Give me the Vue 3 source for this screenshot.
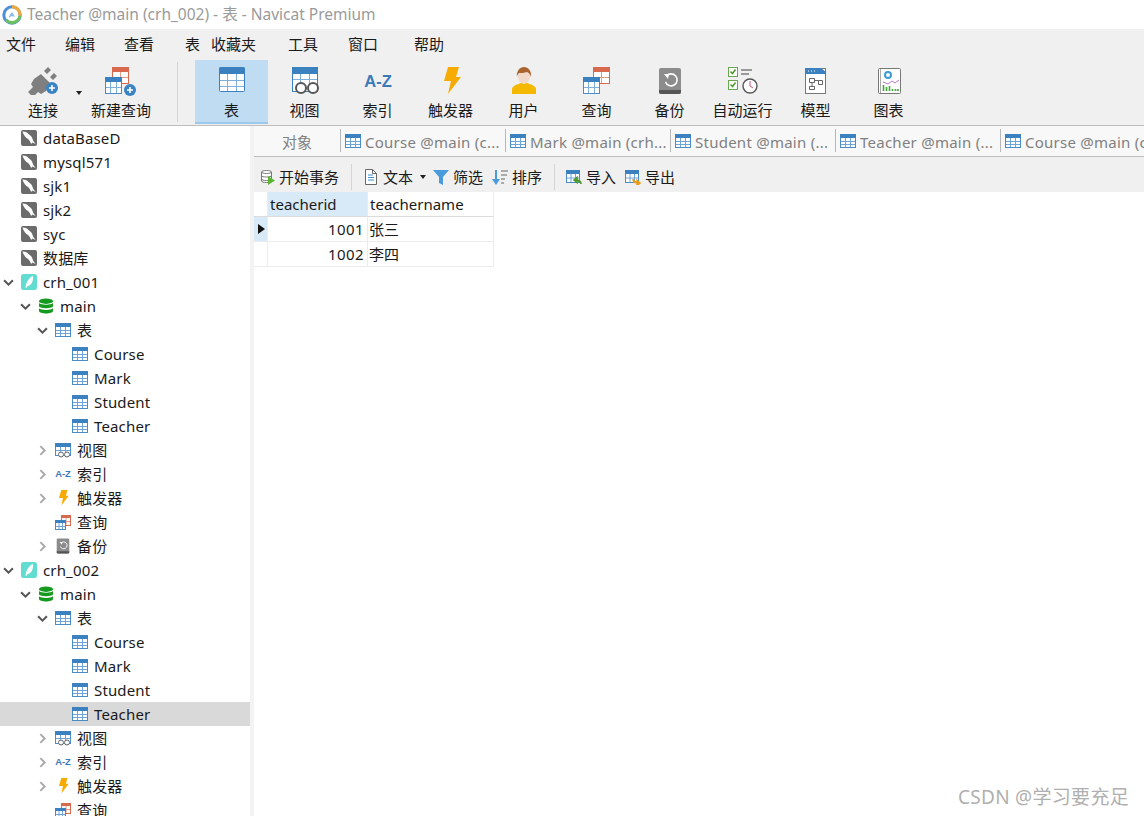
<script setup>
const menus = [
  { t: '文件', w: 59 }, { t: '编辑', w: 59 }, { t: '查看', w: 61 }, { t: '表', w: 26 },
  { t: '收藏夹', w: 77 }, { t: '工具', w: 60 }, { t: '窗口', w: 66 }, { t: '帮助', w: 40 },
]
const tools = [
  { t: '表', i: 'tb-table', w: 26, on: true },
  { t: '视图', i: 'tb-view', w: 30 },
  { t: '索引', i: 'i-az', w: 28 },
  { t: '触发器', i: 'i-bolt', w: 28 },
  { t: '用户', i: 'i-user', w: 28 },
  { t: '查询', i: 'tb-query', w: 28 },
  { t: '备份', i: 'i-backup', w: 28 },
  { t: '自动运行', i: 'i-auto', w: 30 },
  { t: '模型', i: 'i-model', w: 28 },
  { t: '图表', i: 'i-chart', w: 28 },
]
const tabs = ['Course @main (c...', 'Mark @main (crh...', 'Student @main (...', 'Teacher @main (...', 'Course @main (c']

const group = (name, sel) => [
  { t: name, i: 'i-sqlite', l: 0, a: 'down' },
  { t: 'main', i: 'i-db', l: 1, a: 'down' },
  { t: '表', i: 'i-table', l: 2, a: 'down' },
  { t: 'Course', i: 'i-table', l: 3 },
  { t: 'Mark', i: 'i-table', l: 3 },
  { t: 'Student', i: 'i-table', l: 3 },
  { t: 'Teacher', i: 'i-table', l: 3, sel },
  { t: '视图', i: 'i-view', l: 2, a: 'right' },
  { t: '索引', i: 'i-az', l: 2, a: 'right' },
  { t: '触发器', i: 'i-bolt', l: 2, a: 'right' },
  { t: '查询', i: 'i-query', l: 2 },
  { t: '备份', i: 'i-backup', l: 2, a: 'right' },
]
const tree = [
  ...['dataBaseD', 'mysql571', 'sjk1', 'sjk2', 'syc', '数据库'].map(t => ({ t, i: 'i-mysql', l: 0 })),
  ...group('crh_001', false),
  ...group('crh_002', true),
]
const rows = [
  { id: 1001, name: '张三', cur: true },
  { id: 1002, name: '李四', cur: false },
]
</script>

<template>
  <div class="app">
    <svg class="defs" aria-hidden="true">
      <symbol id="i-table" viewBox="0 0 16 16">
        <rect x=".5" y="1.5" width="15" height="13" fill="#fff" stroke="#4a8cc8"/>
        <rect x="0" y="1" width="16" height="4" rx="1" fill="#3b80bf"/>
        <path d="M5.5 5v9M10.5 5v9M1 8.5h14M1 11.5h14" stroke="#6ea5d8" fill="none"/>
      </symbol>
      <symbol id="i-view" viewBox="0 0 16 16">
        <rect x=".5" y="1.5" width="15" height="12" fill="#fff" stroke="#4a8cc8"/>
        <rect x="0" y="1" width="16" height="4" rx="1" fill="#3b80bf"/>
        <path d="M5.5 5v8M10.5 5v8M1 8.5h14" stroke="#6ea5d8" fill="none"/>
        <circle cx="6" cy="12.5" r="2.5" fill="#fff" stroke="#666"/>
        <circle cx="12" cy="12.5" r="2.5" fill="#fff" stroke="#666"/>
      </symbol>
      <symbol id="i-query" viewBox="0 0 16 16">
        <rect x="6.5" y="1.5" width="9" height="10" fill="#fff" stroke="#d9694c"/>
        <rect x="6" y="1" width="10" height="3" fill="#d9694c"/>
        <path d="M11 4v7M7 7.5h8" stroke="#e59a86"/>
        <rect x=".5" y="6.5" width="10" height="9" fill="#fff" stroke="#4a8cc8"/>
        <rect x="0" y="6" width="11" height="3" fill="#3b80bf"/>
        <path d="M4 9v6M7.5 9v6M1 12.5h9" stroke="#6ea5d8"/>
      </symbol>
      <symbol id="tb-table" viewBox="0 0 26 28">
        <rect x=".5" y=".5" width="25" height="24" rx="1" fill="#fff" stroke="#3b80bf"/>
        <path d="M0 2a2 2 0 0 1 2-2h22a2 2 0 0 1 2 2v5H0z" fill="#3b80bf"/>
        <path d="M8.5 7v17M17.5 7v17M1 13.5h24M1 19.5h24" stroke="#7fb0dc" fill="none"/>
      </symbol>
      <symbol id="tb-view" viewBox="0 0 30 28">
        <rect x="2.5" y=".5" width="25" height="24" fill="#fff" stroke="#3b80bf"/>
        <path d="M2 2a2 2 0 0 1 2-2h22a2 2 0 0 1 2 2v5H2z" fill="#3b80bf"/>
        <path d="M10.5 7v10M19.5 7v10M3 12.5h24" stroke="#7fb0dc" fill="none"/>
        <circle cx="11" cy="21" r="5" fill="#fff" stroke="#555" stroke-width="2"/>
        <circle cx="23" cy="21" r="5" fill="#fff" stroke="#555" stroke-width="2"/>
      </symbol>
      <symbol id="tb-query" viewBox="0 0 28 28">
        <rect x="10.5" y=".5" width="16" height="16" fill="#fff" stroke="#d9694c"/>
        <rect x="10" y="0" width="17" height="5" rx="1" fill="#d9694c"/>
        <path d="M18.5 5v11M11 10.5h15" stroke="#e59a86"/>
        <rect x=".5" y="10.5" width="16" height="16" fill="#fff" stroke="#4a8cc8"/>
        <rect x="0" y="10" width="17" height="5" rx="1" fill="#3b80bf"/>
        <path d="M5.5 15v11M11.5 15v11M1 20.5h15" stroke="#7fb0dc"/>
      </symbol>
      <symbol id="tb-newquery" viewBox="0 0 32 30">
        <rect x="7.5" y=".5" width="16" height="16" fill="#fff" stroke="#d9694c"/>
        <rect x="7" y="0" width="17" height="5" rx="1" fill="#d9694c"/>
        <path d="M15.5 5v11M8 10.5h15" stroke="#e59a86"/>
        <rect x=".5" y="10.5" width="16" height="16" fill="#fff" stroke="#4a8cc8"/>
        <rect x="0" y="10" width="17" height="5" rx="1" fill="#3b80bf"/>
        <path d="M5.5 15v11M11.5 15v11M1 20.5h15" stroke="#7fb0dc"/>
        <circle cx="25" cy="23" r="6" fill="#3b84c4"/>
        <path d="M22 23h6M25 20v6" stroke="#fff" stroke-width="1.6"/>
      </symbol>
      <symbol id="tb-connect" viewBox="0 0 30 28">
        <path d="M0 25l5-5-2-3 3-5 7-5 10 10-5 7-5 3-3-2-5 5zM16 4l4-4 3 3-4 4zM22 10l4-4 3 3-4 4z" fill="#7f7f7f"/>
        <circle cx="24" cy="21" r="6" fill="#3b84c4"/>
        <path d="M21 21h6M24 18v6" stroke="#fff" stroke-width="1.6"/>
      </symbol>
      <symbol id="i-az" viewBox="0 0 28 28">
        <text x="14" y="20" text-anchor="middle" font-family="Liberation Sans, sans-serif" font-weight="700" font-size="16.500" fill="#3a7ab8">A-Z</text>
      </symbol>
      <symbol id="i-bolt" viewBox="0 0 28 28">
        <path d="M11 0h11l-3 10h5L11 27l3-13H7z" fill="#f7ab00"/>
      </symbol>
      <symbol id="i-user" viewBox="0 0 28 28">
        <path d="M2 27v-5c0-3 6-5 9-6h6c3 1 9 3 9 6v5z" fill="#f4b800"/>
        <path d="M8 9c0-5 3-8 6-8s6 3 6 8c0 4-3 8-6 8s-6-4-6-8z" fill="#f2d8c8"/>
        <path d="M7 10C6 4 10 0 14 0s8 4 7 10c-1-3-2-4-4-5-3 1-6 1-8 1-1 1-2 2-2 4z" fill="#a9642f"/>
      </symbol>
      <symbol id="i-backup" viewBox="0 0 28 28">
        <rect x="3" y="1" width="22" height="26" rx="2" fill="#8c8c8c"/>
        <path d="M3 23h22v2a2 2 0 0 1-2 2H5a2 2 0 0 1-2-2z" fill="#555"/>
        <path d="M10.500 9a6 6 0 1 1-1 6" stroke="#fff" stroke-width="1.600" fill="none"/>
        <path d="M8 7l5 0-1 5z" fill="#fff"/>
      </symbol>
      <symbol id="i-auto" viewBox="0 0 30 28">
        <rect x=".5" y=".5" width="9" height="9" fill="#fff" stroke="#6aa84f"/>
        <rect x=".5" y="13.500" width="9" height="9" fill="#fff" stroke="#6aa84f"/>
        <path d="M2.500 4.500l2 2 3-4M2.500 17.500l2 2 3-4" stroke="#4c9a2a" stroke-width="1.500" fill="none"/>
        <path d="M13 3h11M13 7h8" stroke="#999" stroke-width="2"/>
        <circle cx="22" cy="19" r="7" fill="#fff" stroke="#555" stroke-width="1.400"/>
        <path d="M22 14v5l3 2" stroke="#c2547a" fill="none"/>
      </symbol>
      <symbol id="i-model" viewBox="0 0 28 28">
        <rect x="3.500" y="1.500" width="20" height="25" fill="#fff" stroke="#777"/>
        <path d="M3 1h16l5 4v2H3z" fill="#3b80bf"/>
        <path d="M6 4h1M9 4h1M12 4h1" stroke="#fff"/>
        <path d="M7.500 11.500h5v4h-5zM7.500 19.500h5v3h-5zM16.500 13.500h4v4h-4zM10 15.500v4M12.500 13.500h4" fill="none" stroke="#666"/>
      </symbol>
      <symbol id="i-chart" viewBox="0 0 28 28">
        <rect x="3.500" y="1.500" width="22" height="25" rx="1" fill="#fff" stroke="#777"/>
        <path d="M5.500 2v24" stroke="#aaa"/>
        <circle cx="13" cy="8" r="3" fill="none" stroke="#3f9ad6" stroke-width="2"/>
        <path d="M8 15l5 2 4-3 3 2 4-3" stroke="#b877c8" fill="none"/>
        <path d="M8.500 18v6M11.500 20v4M14.500 19v5M17.500 22v2M20.500 22v2M23 22v2" stroke="#3fa535" stroke-width="1.600"/>
      </symbol>
      <symbol id="i-mysql" viewBox="0 0 16 16">
        <rect width="16" height="16" rx="2" fill="#6b6b6b"/>
        <path d="M1.500 1.500c3 0 5 1 6.500 3 2 1 3.500 3 4 6l2.500 3.500-3-1.500-1.500 1.500c-.5-2-1.500-4-3-5C4.500 7.500 2.500 5 1.500 1.500z" fill="#fff"/>
      </symbol>
      <symbol id="i-sqlite" viewBox="0 0 16 16">
        <rect width="16" height="16" rx="2.500" fill="#62dbd0"/>
        <path d="M4.500 13.500C5 8 8 4 12 2c.5 5-1.500 9.500-5.500 10L5.500 14z" fill="#fff"/>
      </symbol>
      <symbol id="i-db" viewBox="0 0 16 16">
        <ellipse cx="8" cy="3.200" rx="7" ry="2.700" fill="#149a1e"/>
        <path d="M1 5c2 2.300 12 2.300 14 0v3.500c-2 2.300-12 2.300-14 0zM1 10.300c2 2.300 12 2.300 14 0v2.700c0 3.300-14 3.300-14 0z" fill="#149a1e"/>
      </symbol>
      <symbol id="i-txn" viewBox="0 0 16 16">
        <path d="M1.500 3c0-2 10-2 10 0v9c0 2-10 2-10 0z" fill="#fff" stroke="#777"/>
        <path d="M1.500 3c0 2 10 2 10 0M1.500 6.500c0 2 10 2 10 0M1.500 10c0 2 10 2 10 0" fill="none" stroke="#777"/>
        <path d="M8 7l7 4.500L8 16z" fill="#5cb531"/>
      </symbol>
      <symbol id="i-doc" viewBox="0 0 16 16">
        <path d="M2.500.5h7l4 4v11h-11z" fill="#fff" stroke="#666"/>
        <path d="M9.500.5v4h4" fill="none" stroke="#666"/>
        <path d="M5 6h5M5 8.500h6M5 11h6" stroke="#3f8fd0"/>
      </symbol>
      <symbol id="i-filter" viewBox="0 0 16 16">
        <path d="M0 1h16l-6 7v8l-4-2V8z" fill="#4a9bdc"/>
      </symbol>
      <symbol id="i-sort" viewBox="0 0 16 16">
        <path d="M4 1v11" stroke="#4a9bdc" stroke-width="2"/>
        <path d="M0 10h8l-4 6z" fill="#4a9bdc"/>
        <path d="M9 2h7M9 6h6M9 10h4M9 14h3" stroke="#666"/>
      </symbol>
      <symbol id="i-import" viewBox="0 0 16 16">
        <rect x=".5" y="1.500" width="13" height="12" fill="#fff" stroke="#4a8cc8"/>
        <rect x="0" y="1" width="14" height="4" fill="#3b80bf"/>
        <path d="M5 5v8M9.500 5v8M1 9h12" stroke="#6ea5d8"/>
        <path d="M15 15c0-3-2-4-5-4M8 11l3-2.500v5z" stroke="#4c9a2a" stroke-width="1.600" fill="#4c9a2a"/>
      </symbol>
      <symbol id="i-export" viewBox="0 0 16 16">
        <rect x=".5" y="1.500" width="13" height="12" fill="#fff" stroke="#4a8cc8"/>
        <rect x="0" y="1" width="14" height="4" fill="#3b80bf"/>
        <path d="M5 5v8M9.500 5v8M1 9h12" stroke="#6ea5d8"/>
        <path d="M8 10c0 3 2 4 5 4M15 14l-3-2.500v5z" stroke="#ef9a1a" stroke-width="1.600" fill="#ef9a1a"/>
      </symbol>
    </svg>

    <header class="titlebar">
      <svg class="logo" viewBox="0 0 20 20">
        <circle cx="10" cy="10" r="8.200" fill="#fff" stroke="#4a90d9" stroke-width="3" />
        <path d="M10 1.800a8.200 8.200 0 0 1 8 9" fill="none" stroke="#f0a838" stroke-width="3"/>
        <path d="M18 11a8.200 8.200 0 0 1-14 4" fill="none" stroke="#6cc060" stroke-width="3"/>
        <path d="M7 13c0-2 1-4 3-6 1 1 2 3 3 5-2-1-4-1-6 1z" fill="#8fbce8"/>
      </svg>
      <span>Teacher @main (crh_002) - 表 - Navicat Premium</span>
    </header>

    <nav class="menubar">
      <span v-for="m in menus" :key="m.t" class="menu" :style="{ width: m.w + 'px' }">{{ m.t }}</span>
    </nav>

    <div class="toolbar">
      <div class="tool first">
        <svg class="ti-connect"><use href="#tb-connect"/></svg>
        <span>连接</span>
      </div>
      <i class="caret big"></i>
      <div class="tool second">
        <svg class="ti-new"><use href="#tb-newquery"/></svg>
        <span>新建查询</span>
      </div>
      <div class="tdiv"></div>
      <div v-for="t in tools" :key="t.t" class="tool" :class="{ on: t.on }">
        <svg class="ti" :style="{ width: t.w + 'px' }"><use :href="'#' + t.i"/></svg>
        <span>{{ t.t }}</span>
      </div>
    </div>

    <div class="body">
      <aside class="tree">
        <div v-for="(n, idx) in tree" :key="idx" class="node" :class="{ sel: n.sel }" :style="{ paddingLeft: 4 + n.l * 17 + 'px' }">
          <span class="arrow">
            <svg v-if="n.a === 'down'" viewBox="0 0 10 10"><path d="M1 3l4 4 4-4" fill="none" stroke="#555" stroke-width="1.800"/></svg>
            <svg v-else-if="n.a === 'right'" viewBox="0 0 10 10"><path d="M3 1l4 4-4 4" fill="none" stroke="#aaa" stroke-width="1.800"/></svg>
          </span>
          <svg class="nicon"><use :href="'#' + n.i"/></svg>
          <span class="ntext">{{ n.t }}</span>
        </div>
      </aside>

      <div class="gutter"></div>

      <main class="pane">
        <div class="tabs">
          <div class="tab obj">对象</div>
          <div v-for="(t, i) in tabs" :key="i" class="tab">
            <svg class="ticon"><use href="#i-table"/></svg>
            <span>{{ t }}</span>
          </div>
        </div>

        <div class="subbar">
          <span class="sb sb-txn"><svg><use href="#i-txn"/></svg>开始事务</span>
          <i class="sdiv"></i>
          <span class="sb sb-doc"><svg><use href="#i-doc"/></svg>文本</span>
          <i class="caret"></i>
          <span class="sb sb-filter"><svg><use href="#i-filter"/></svg>筛选</span>
          <span class="sb sb-sort"><svg><use href="#i-sort"/></svg>排序</span>
          <i class="sdiv d2"></i>
          <span class="sb sb-imp"><svg><use href="#i-import"/></svg>导入</span>
          <span class="sb sb-exp"><svg><use href="#i-export"/></svg>导出</span>
        </div>

        <div class="grid">
          <div class="gr head">
            <div class="ind"></div>
            <div class="c1 hl">teacherid</div>
            <div class="c2">teachername</div>
          </div>
          <div v-for="r in rows" :key="r.id" class="gr data">
            <div class="ind" :class="{ hl: r.cur }"><b v-if="r.cur"></b></div>
            <div class="c1 num">{{ r.id }}</div>
            <div class="c2">{{ r.name }}</div>
          </div>
        </div>
      </main>
    </div>

    <div class="mark">CSDN @学习要充足</div>
  </div>
</template>

<style scoped>
.app {
  width: 1144px;
  height: 816px;
  overflow: hidden;
  position: relative;
  display: flex;
  flex-direction: column;
  background: #fff;
  color: #1a1a1a;
  font: 15px/20px "Noto Sans", "Noto Sans CJK SC", sans-serif;
}
.defs { position: absolute; width: 0; height: 0; }
.titlebar {
  height: 29px;
  flex: none;
  box-sizing: border-box;
  display: flex;
  align-items: center;
  padding-left: 2px;
  color: #9a9a9a;
  font-size: 15.500px;
}
.titlebar span { padding-bottom: 2px; }
.logo { width: 20px; height: 20px; margin-right: 5px; }
.menubar {
  height: 31px;
  flex: none;
  box-sizing: border-box;
  background: #f0f0f0;
  display: flex;
  align-items: center;
  padding: 0 0 2px 6px;
}
.menu { flex: none; white-space: nowrap; }
.toolbar {
  height: 66px;
  flex: none;
  box-sizing: border-box;
  background: #f0f0f0;
  border-bottom: 1px solid #bdbdbd;
  display: flex;
  align-items: flex-start;
}
.tool {
  width: 73px;
  height: 64px;
  flex: none;
  box-sizing: border-box;
  display: flex;
  flex-direction: column;
  align-items: center;
  justify-content: flex-end;
  padding-bottom: 4px;
  white-space: nowrap;
}
.tool svg { flex: none; margin-bottom: 5px; }
.ti { height: 28px; }
.tool.on { background: #c0dcf3; border-bottom: 2px solid #9cc8ec; padding-bottom: 2px; }
.tool.first { width: 72px; margin-left: 7px; }
.tool.second { width: 72px; margin-left: 5px; }
.ti-connect { width: 30px; height: 28px; }
.ti-new { width: 32px; height: 30px; margin-bottom: 3px !important; }
.caret {
  flex: none;
  width: 0;
  height: 0;
  border: 3px solid transparent;
  border-top: 4px solid #222;
  border-bottom: 0;
  margin: 0 0 0 7px;
}
.caret.big { margin: 31px -2px 0 -3px; width: 0; }
.tdiv {
  width: 1px;
  height: 60px;
  background: #d4d4d4;
  margin: 2px 17px 0 20px;
  flex: none;
}
.body { flex: 1; min-height: 0; display: flex; }
.tree { width: 250px; flex: none; overflow: hidden; }
.node {
  height: 24px;
  display: flex;
  align-items: center;
  white-space: nowrap;
  box-sizing: border-box;
}
.node.sel { background: #d9d9d9; }
.arrow { width: 17px; height: 16px; flex: none; display: flex; align-items: center; }
.arrow svg { width: 11px; height: 11px; margin-left: -1px; }
.nicon { width: 16px; height: 16px; flex: none; margin-right: 6px; }
.ntext { padding-bottom: 1px; letter-spacing: .15px; }
.gutter { width: 4px; flex: none; background: #f3f3f3; }
.pane { flex: 1; min-width: 0; display: flex; flex-direction: column; }
.tabs {
  height: 31px;
  flex: none;
  box-sizing: border-box;
  background: #f8f8f8;
  border-bottom: 1px solid #bdbdbd;
  display: flex;
  overflow: hidden;
}
.tab {
  width: 165px;
  flex: none;
  box-sizing: border-box;
  display: flex;
  align-items: center;
  padding-left: 4px;
  border-right: 1px solid #b8b8b8;
  color: #808080;
  white-space: nowrap;
  margin: 3px 0 4px;
  letter-spacing: .25px;
}
.tab span { padding-top: 2px; }
.tab.obj { width: 87px; justify-content: center; padding: 2px 0 0; letter-spacing: 0; }
.ticon { width: 16px; height: 16px; margin-right: 4px; flex: none; }
.subbar {
  height: 35px;
  flex: none;
  box-sizing: border-box;
  padding-top: 5px;
  background: #f0f0f0;
  display: flex;
  align-items: center;
  white-space: nowrap;
}
.sb { display: flex; align-items: center; flex: none; }
.sb svg { width: 16px; height: 16px; margin-right: 4px; flex: none; }
.sb-txn { margin-left: 6px; }
.sb-txn svg { margin-right: 3px; }
.sdiv { width: 1px; height: 26px; background: #d4d4d4; flex: none; margin: 0 11px 0 12px; }
.sb-doc svg { margin-right: 4px; }
.sb-filter { margin-left: 7px; }
.sb-sort { margin-left: 9px; }
.d2 { margin: 0 11px 0 12px; }
.sb-exp { margin-left: 9px; }
.grid { padding: 0; }
.gr { display: flex; height: 25px; box-sizing: border-box; }
.gr > div { box-sizing: border-box; border-right: 1px solid #ececec; border-bottom: 1px solid #ececec; white-space: nowrap; }
.ind { width: 14px; display: flex; align-items: center; padding-left: 4px; }
.ind b { width: 0; height: 0; border: 5px solid transparent; border-left: 7px solid #111; border-right: 0; }
.c1 { width: 100px; padding: 2px 3px 0 2px; }
.c2 { width: 126px; padding: 2px 3px 0 2px; }
.data .c2 { padding-left: 1px; }
.num { text-align: right; letter-spacing: .4px; }
.hl { background: #d8e9f8; }
.head > div { border-bottom-color: #dcdcdc; }
.mark {
  position: absolute;
  right: 15px;
  bottom: 8px;
  font-size: 19px;
  letter-spacing: .3px;
  color: #b0b0b0;
  line-height: 22px;
  white-space: nowrap;
}
</style>

<style>
html, body { margin: 0; overflow: hidden; }
</style>
